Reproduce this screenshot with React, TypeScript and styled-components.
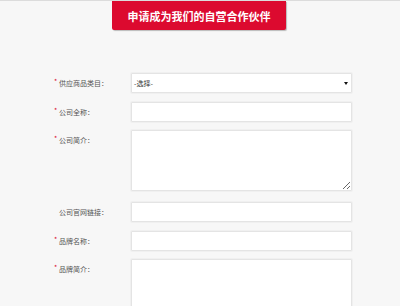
import styled, { createGlobalStyle } from 'styled-components';

const GlobalStyle = createGlobalStyle`
  html, body {
    margin: 0;
    padding: 0;
    background: #f7f7f7;
  }
  body {
    font-family: "Noto Sans CJK SC", "Noto Sans", sans-serif;
  }
`;

const Page = styled.div`
  min-height: 306px;
  border-top: 1px solid #dcdcdc;
  background: #f7f7f7;
  box-sizing: border-box;
`;

const BannerWrap = styled.div`
  display: flex;
  justify-content: center;
`;

const Banner = styled.div`
  width: 174px;
  height: 29px;
  margin-left: -2px;
  display: flex;
  align-items: center;
  justify-content: center;
  background: #dc0a2f;
  color: #fff;
  font-size: 11px;
  font-weight: bold;
  border-radius: 0 0 2px 2px;
  box-shadow: 1px 1px 1px rgba(0, 0, 0, 0.25);
`;

const Form = styled.div`
  margin-top: 43px;
  padding-left: 54px;
`;

const Row = styled.div`
  display: grid;
  grid-template-columns: 77px 221px;
  align-items: start;
  margin-bottom: ${({ $gap }) => $gap}px;
`;

const Label = styled.div`
  display: flex;
  align-items: center;
  height: 20px;
  font-size: 7px;
  color: #555;
  white-space: nowrap;
`;

const Star = styled.span`
  width: 5px;
  color: #d9082b;
  font-size: 7px;
  position: relative;
  top: -2px;
`;

const field = `
  box-sizing: border-box;
  width: 221px;
  margin: 0;
  border: 1px solid #e4e4e4;
  border-radius: 1px;
  background: #fff;
  box-shadow: 0 0 0 1px #f0f0f0;
  outline: none;
  font-family: inherit;
`;

const Input = styled.input`
  ${field}
  display: block;
  height: 20px;
`;

const TextArea = styled.textarea`
  ${field}
  display: block;
  height: ${({ $h }) => $h}px;
  resize: vertical;
`;

const SelectBox = styled.div`
  ${field}
  height: 20px;
  display: flex;
  align-items: center;
  justify-content: space-between;
  padding: 0 3px 0 2px;
  font-size: 7px;
  color: #333;
`;

const Arrow = styled.span`
  width: 0;
  height: 0;
  border-left: 2px solid transparent;
  border-right: 2px solid transparent;
  border-top: 3px solid #111;
`;

const rows = [
  { label: '公司全称：', req: true, kind: 'input', gap: 8 },
  { label: '公司简介：', req: true, kind: 'area', h: 61, gap: 11 },
  { label: '公司官网链接：', req: false, kind: 'input', gap: 9 },
  { label: '品牌名称：', req: true, kind: 'input', gap: 8 },
  { label: '品牌简介：', req: true, kind: 'area', h: 61, gap: 8 },
];

export default function App() {
  return (
    <Page>
      <GlobalStyle />
      <BannerWrap>
        <Banner>申请成为我们的自营合作伙伴</Banner>
      </BannerWrap>
      <Form>
        <Row $gap={9}>
          <Label>
            <Star>*</Star>供应商品类目：
          </Label>
          <SelectBox>
            <span>-选择-</span>
            <Arrow />
          </SelectBox>
        </Row>
        {rows.map(r => (
          <Row key={r.label} $gap={r.gap}>
            <Label>
              <Star>{r.req ? '*' : ''}</Star>
              {r.label}
            </Label>
            {r.kind === 'input' ? <Input /> : <TextArea $h={r.h} />}
          </Row>
        ))}
      </Form>
    </Page>
  );
}
